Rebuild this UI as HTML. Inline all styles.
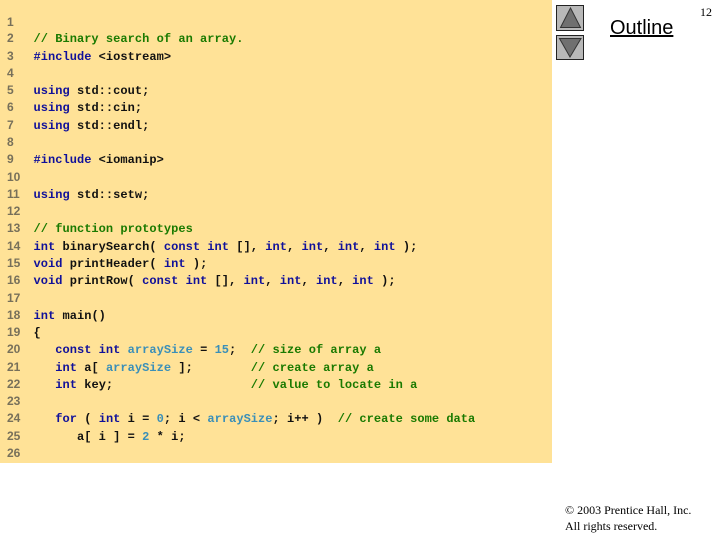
<!DOCTYPE html>
<html><head><meta charset="utf-8">
<style>
html,body{margin:0;padding:0;background:#fff}
#p{position:relative;width:720px;height:540px;overflow:hidden;background:#fff}
#bg{position:absolute;left:0;top:0;width:552px;height:463px;background:#ffe297}
.n,.c{position:absolute;white-space:pre;font-family:"Liberation Mono",monospace;font-size:12px;line-height:14px;font-weight:bold}
.n{left:7px;color:#77705a;font-family:"Liberation Sans",sans-serif}
.c{left:33.5px;color:#111;letter-spacing:0.04px}
.g{color:#1a7a00}.b{color:#10109a}.t{color:#3a8fb8}
.s{position:absolute;font-family:"Liberation Serif",serif;color:#000;white-space:pre}
</style></head><body><div id="p">
<div id="bg"></div>
<div class="n" style="top:15px">1</div>
<div class="n" style="top:31px">2</div>
<div class="n" style="top:49px">3</div>
<div class="n" style="top:66px">4</div>
<div class="n" style="top:83px">5</div>
<div class="n" style="top:100px">6</div>
<div class="n" style="top:118px">7</div>
<div class="n" style="top:135px">8</div>
<div class="n" style="top:152px">9</div>
<div class="n" style="top:170px">10</div>
<div class="n" style="top:187px">11</div>
<div class="n" style="top:204px">12</div>
<div class="n" style="top:221px">13</div>
<div class="n" style="top:239px">14</div>
<div class="n" style="top:256px">15</div>
<div class="n" style="top:273px">16</div>
<div class="n" style="top:291px">17</div>
<div class="n" style="top:308px">18</div>
<div class="n" style="top:325px">19</div>
<div class="n" style="top:342px">20</div>
<div class="n" style="top:360px">21</div>
<div class="n" style="top:377px">22</div>
<div class="n" style="top:394px">23</div>
<div class="n" style="top:411px">24</div>
<div class="n" style="top:429px">25</div>
<div class="n" style="top:446px">26</div>
<div class="c" style="top:32px"><span class="g">// Binary search of an array.</span></div>
<div class="c" style="top:50px"><span class="b">#include</span> &lt;iostream&gt;</div>
<div class="c" style="top:84px"><span class="b">using</span> std::cout;</div>
<div class="c" style="top:101px"><span class="b">using</span> std::cin;</div>
<div class="c" style="top:119px"><span class="b">using</span> std::endl;</div>
<div class="c" style="top:153px"><span class="b">#include</span> &lt;iomanip&gt;</div>
<div class="c" style="top:188px"><span class="b">using</span> std::setw;</div>
<div class="c" style="top:222px"><span class="g">// function prototypes</span></div>
<div class="c" style="top:240px"><span class="b">int</span> binarySearch( <span class="b">const int</span> [], <span class="b">int</span>, <span class="b">int</span>, <span class="b">int</span>, <span class="b">int</span> );</div>
<div class="c" style="top:257px"><span class="b">void</span> printHeader( <span class="b">int</span> );</div>
<div class="c" style="top:274px"><span class="b">void</span> printRow( <span class="b">const int</span> [], <span class="b">int</span>, <span class="b">int</span>, <span class="b">int</span>, <span class="b">int</span> );</div>
<div class="c" style="top:309px"><span class="b">int</span> main()</div>
<div class="c" style="top:326px">{</div>
<div class="c" style="top:343px">   <span class="b">const int</span> <span class="t">arraySize</span> = <span class="t">15</span>;  <span class="g">// size of array a</span></div>
<div class="c" style="top:361px">   <span class="b">int</span> a[ <span class="t">arraySize</span> ];        <span class="g">// create array a</span></div>
<div class="c" style="top:378px">   <span class="b">int</span> key;                   <span class="g">// value to locate in a</span></div>
<div class="c" style="top:412px">   <span class="b">for</span> ( <span class="b">int</span> i = <span class="t">0</span>; i &lt; <span class="t">arraySize</span>; i++ )  <span class="g">// create some data</span></div>
<div class="c" style="top:430px">      a[ i ] = <span class="t">2</span> * i;</div>
<svg style="position:absolute;left:556px;top:5px" width="28" height="56" viewBox="0 0 28 56">
<rect x="0.5" y="0.5" width="27" height="25" fill="#b8b8b8" stroke="#222"/>
<path d="M14.5 3 L24.5 22.5 L4.5 22.5 Z" fill="#707070" stroke="#333"/>
<rect x="0.5" y="30.5" width="27" height="24" fill="#b8b8b8" stroke="#222"/>
<path d="M3.5 33.5 L25 33.5 L14 52 Z" fill="#707070" stroke="#333"/>
</svg>
<div style="position:absolute;left:610px;top:16px;font-family:'Liberation Sans',sans-serif;font-size:20px;line-height:24px;color:#000;text-decoration:underline;white-space:pre">Outline</div>
<div class="s" style="left:700px;top:5px;font-size:12px;line-height:14px">12</div>
<div class="s" style="left:565px;top:503px;font-size:12px;line-height:14px">© 2003 Prentice Hall, Inc.</div>
<div class="s" style="left:565px;top:519px;font-size:12px;line-height:14px">All rights reserved.</div>
</div></body></html>
